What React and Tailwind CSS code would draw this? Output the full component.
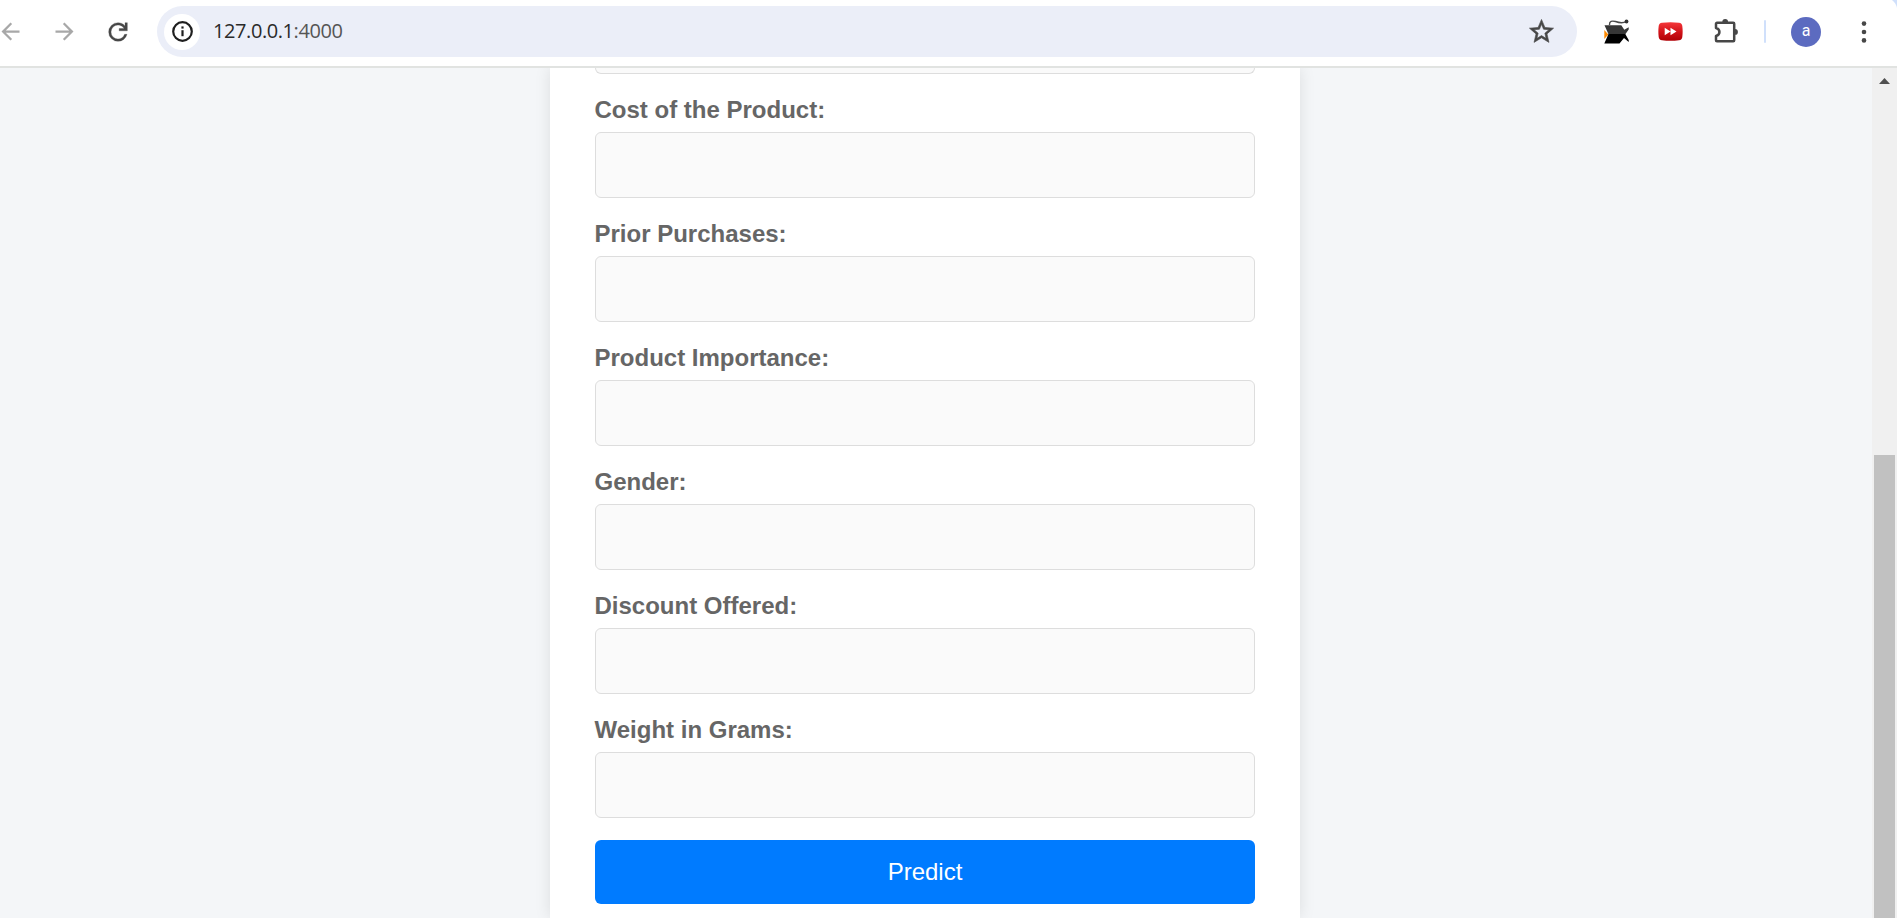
const labels = [
  "Cost of the Product:",
  "Prior Purchases:",
  "Product Importance:",
  "Gender:",
  "Discount Offered:",
  "Weight in Grams:",
];

function BrowserBar() {
  return (
    <header className="relative flex h-[68px] shrink-0 items-start border-b-2 border-[#e1e3e1] bg-white">
      <div className="flex h-[63px] flex-1 items-center">
        <svg className="-ml-[3px] size-[27px] shrink-0" viewBox="0 0 24 24" fill="#a8a8a8">
          <path d="M20 11H7.83l5.59-5.59L12 4l-8 8 8 8 1.41-1.41L7.83 13H20v-2z" />
        </svg>
        <svg className="ml-[26.5px] size-[27px] shrink-0" viewBox="0 0 24 24" fill="#a8a8a8">
          <path d="M12 4l-1.41 1.41L16.17 11H4v2h12.17l-5.58 5.59L12 20l8-8z" />
        </svg>
        <svg className="ml-[26.5px] size-[28px] shrink-0" viewBox="0 -960 960 960" fill="#474747" stroke="#474747" strokeWidth="10">
          <path d="M480-160q-134 0-227-93t-93-227q0-134 93-227t227-93q69 0 132 28.5T720-690v-110h80v280H520v-80h168q-32-56-87.5-88T480-720q-100 0-170 70t-70 170q0 100 70 170t170 70q77 0 139-44t87-116h84q-28 106-114 173t-196 67Z" />
        </svg>
        <div className="ml-[25px] flex h-[51px] w-[1420px] shrink-0 items-center rounded-full bg-[#ebeef8] pl-[7px] pr-[21px]">
          <span className="flex size-9 items-center justify-center rounded-full bg-white">
            <svg className="size-[21px]" viewBox="0 0 21 21" fill="none" stroke="#1f1f1f">
              <circle cx="10.5" cy="10.5" r="9.3" strokeWidth="2.2" />
              <path d="M10.5 9.2v6" strokeWidth="2.2" />
              <path d="M10.5 5.4v2.2" strokeWidth="2.2" />
            </svg>
          </span>
          <span className="ml-[13px] flex-1 pb-px font-['Open_Sans',sans-serif] text-[20px] leading-[30px] font-normal tracking-[-0.42px] text-[#2a2a2a]">
            127.0.0.1<span className="text-[#555]">:4000</span>
          </span>
          <svg className="size-[29px]" viewBox="0 0 24 24" fill="#474747" stroke="#474747" strokeWidth=".5">
            <path d="M22 9.24l-7.19-.62L12 2 9.19 8.63 2 9.24l5.46 4.73L5.82 21 12 17.27 18.18 21l-1.63-7.03L22 9.24zM12 15.4l-3.76 2.27 1-4.28-3.32-2.88 4.38-.38L12 6.1l1.71 4.04 4.38.38-3.32 2.88 1 4.28L12 15.4z" />
          </svg>
        </div>
        <svg className="ml-[26px] h-[26px] w-[27px] shrink-0" viewBox="0 0 27 26">
          <path d="M1.300 11l4 4.500-4 4.500z" fill="#ff8a00" />
          <path d="M1.500 6.200h16.800l3 4.600 4.400-2.500v2.200L22.300 15.200H5.500z" fill="#363636" />
          <path d="M5.500 15h16.800L25.700 21v2L21 19l-4.500 5.500H1.300z" fill="#000" />
          <path d="M6.500 6C6.200 2 9 1.600 12.500 2.500 16.500 4 19.500 4.600 23.500 2.500" fill="none" stroke="#4a4a4a" strokeWidth="1.400" />
          <circle cx="23.500" cy="2.500" r="1.900" fill="#333" />
        </svg>
        <svg className="ml-[28px] h-[19px] w-[25px] shrink-0" viewBox="0 0 25 19">
          <defs>
            <linearGradient id="red" x1="0" y1="0" x2="0" y2="1">
              <stop offset="0" stopColor="#f5383b" />
              <stop offset=".5" stopColor="#d3141a" />
              <stop offset="1" stopColor="#b00006" />
            </linearGradient>
          </defs>
          <path d="M4 .7Q12.500-.4 21 .7 24 1 24.300 4q.7 5.500 0 11-.3 3-3.300 3.300-8.500 1-17 0Q1 18 .7 15 0 9.500.7 4 1 1 4 .7z" fill="url(#red)" />
          <path d="M6.700 5.800l5.800 3.700-5.800 3.700zM12.500 5.800l6 3.700-6 3.700z" fill="#fff" />
        </svg>
        <svg className="ml-[30.5px] h-[25px] w-[25px] shrink-0" viewBox="0 0 25 25">
          <path d="M3 3.800h16.200a1 1 0 0 1 1 1v16.400a1 1 0 0 1-1 1H3a1 1 0 0 1-1-1v-4.200c4.600-1.300 4.600-6.700 0-8V4.800a1 1 0 0 1 1-1z" fill="none" stroke="#474747" strokeWidth="2.500" strokeLinejoin="round" />
          <path d="M8.300 3a2.900 2.900 0 0 1 5.800 0zM21 10a2.900 2.900 0 0 1 0 5.800z" fill="#474747" />
        </svg>
        <span className="ml-[25.5px] h-[23px] w-[2px] shrink-0 rounded-full bg-[#d0e0fb]" />
        <span className="ml-[25px] flex size-[30px] shrink-0 items-center justify-center rounded-full bg-[#5c6bc0] pb-[1px] font-['Roboto',sans-serif] text-[16px] leading-none font-normal text-white">
          a
        </span>
        <svg className="ml-[40px] h-[22px] w-[6px] shrink-0" viewBox="0 0 6 22" fill="#474747">
          <circle cx="3" cy="2.600" r="2.300" />
          <circle cx="3" cy="11" r="2.300" />
          <circle cx="3" cy="19.400" r="2.300" />
        </svg>
      </div>
      <svg className="absolute top-0 right-0 size-[8px]" viewBox="0 0 8 8" fill="#d0e0fb">
        <path d="M3 0h5v8Q7 3 3 0z" />
      </svg>
    </header>
  );
}

function Scrollbar() {
  return (
    <div className="flex w-[25px] shrink-0 flex-col items-center bg-[#f0f0f0]">
      <svg className="mt-[10px] h-[6px] w-[11px]" viewBox="0 0 11 6" fill="#505050">
        <path d="M5.500 0L11 6H0z" />
      </svg>
      <div className="mt-[371px] w-[21px] flex-1 bg-[#c1c1c1]" />
    </div>
  );
}

export default function App() {
  return (
    <div className="flex h-[918px] w-full flex-col overflow-hidden font-['Liberation_Sans',Arial,sans-serif]">
      <BrowserBar />
      <div className="flex min-h-0 flex-1">
        <main className="flex min-w-0 flex-1 justify-center overflow-hidden bg-[#f4f6f8]">
          <form className="-ml-[22px] w-[750px] shrink-0 bg-white px-[45px] shadow-[0_0_15px_rgba(0,0,0,0.1)]">
            <div className="h-[6px] rounded-b-[6px] border border-t-0 border-[#ddd] bg-[#fafafa]" />
            {labels.map((label) => (
              <label key={label} className="flex flex-col pt-[22px]">
                <span className="-ml-[0.5px] h-9 text-[24px] leading-7 font-bold text-[#666]">{label}</span>
                <input className="h-[66px] w-full rounded-[6px] border border-[#ddd] bg-[#fafafa] px-4 outline-none" />
              </label>
            ))}
            <button type="button" className="mt-[22px] block h-16 w-full rounded-[6px] bg-[#007bff] text-[24px] leading-none text-white">
              Predict
            </button>
            <div className="h-[60px]" />
          </form>
        </main>
        <Scrollbar />
      </div>
    </div>
  );
}
